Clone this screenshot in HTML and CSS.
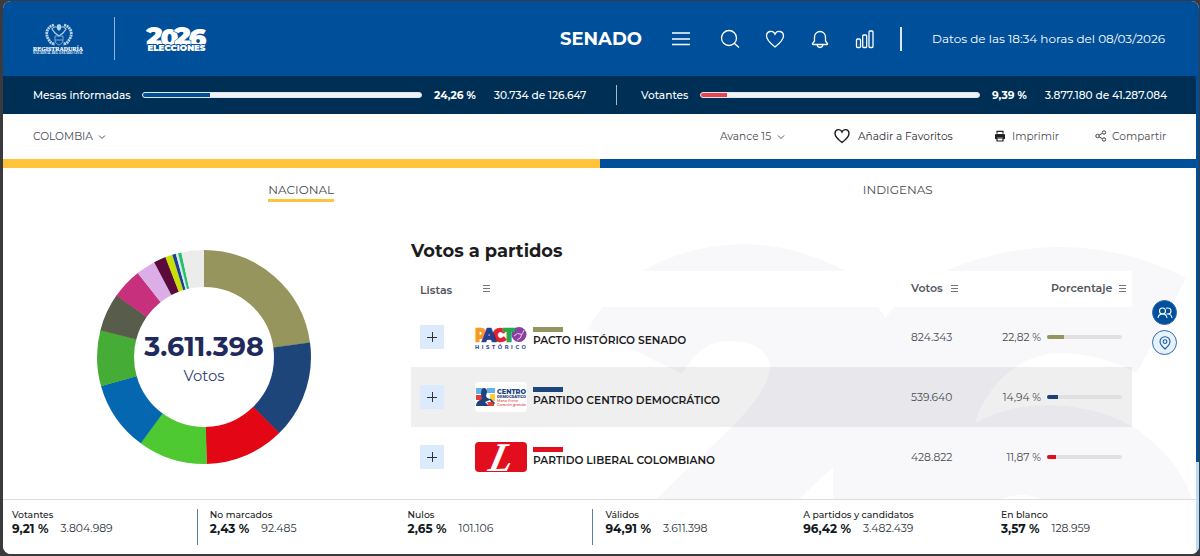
FILE: index.html
```html
<!DOCTYPE html>
<html lang="es">
<head>
<meta charset="utf-8">
<title>Senado 2026</title>
<link rel="stylesheet" href="styles.css">
</head>
<body>
<div class="window">
<div class="page">
  <header class="topbar">
    <svg class="seal" width="54" height="38" viewBox="0 0 54 38">
      <g fill="none" stroke="#b9d1ea">
        <path d="M22 3C14 5 13 13 17 18c1 3 4 4 6 4M32 3c8 2 9 10 5 15-1 3-4 4-6 4" stroke-width="2.800" stroke-dasharray="2 .6"/>
        <path d="M20 7c2-3 5-3 7 0 2-3 5-3 7 0l-3 4-4 3-4-3z" stroke-width="1.200"/>
        <path d="M23 14h8v4c0 3-2 4-4 5-2-1-4-2-4-5zM23 18h8" stroke-width="1" stroke="#7fa9d4"/>
      </g>
      <path d="M25 3l2-1 2 1v4l-2 2-2-2z" fill="#b9d1ea"/>
      <text x="1" y="29" class="seal-name" textLength="50" lengthAdjust="spacingAndGlyphs">REGISTRADURÍA</text>
      <text x="1" y="32" class="seal-sub" textLength="50" lengthAdjust="spacingAndGlyphs">NACIONAL DEL ESTADO CIVIL</text>
    </svg>
    <span class="logo-rule"></span>
    <svg class="elections" width="64" height="34" viewBox="0 0 64 34">
      <g class="year">
        <text x="0" y="22.500" textLength="17" lengthAdjust="spacingAndGlyphs">2</text>
        <text x="14.500" y="24.500" textLength="18" lengthAdjust="spacingAndGlyphs">0</text>
        <text x="42.500" y="24.500" textLength="18" lengthAdjust="spacingAndGlyphs">6</text>
        <text x="28" y="22.500" textLength="17" lengthAdjust="spacingAndGlyphs">2</text>
      </g>
      <text x="1.500" y="28.500" class="elec" textLength="58" lengthAdjust="spacingAndGlyphs">ELECCIONES</text>
    </svg>
    <div class="nav">
      <span class="senado">SENADO</span>
      <svg width="20" height="20" viewBox="0 0 20 20"><path d="M1 4h18M1 10h18M1 15.500h18"/></svg>
      <svg width="20" height="20" viewBox="0 0 20 20"><circle cx="9" cy="9" r="7.500"/><path d="M14.500 14.500l4.500 4"/></svg>
      <svg width="20" height="20" viewBox="0 0 20 20"><path d="M10 18C5 14 1.500 11 1.500 7 1.500 1.800 8 .8 10 5.200c2-4.400 8.500-3.400 8.500 1.800 0 4-3.500 7-8.500 11z"/></svg>
      <svg width="20" height="20" viewBox="0 0 20 20"><path d="M4.500 12V8a5.500 5.500 0 0 1 11 0v4l2 2.500q.4 1-.7 1H3.200q-1.100 0-.7-1zM7 15.500q.5 3 3 3t3-3"/></svg>
      <svg width="20" height="20" viewBox="0 0 20 20"><rect x="1.500" y="10" width="4" height="8.500" rx="1"/><rect x="7.700" y="6" width="4" height="12.500" rx="1"/><rect x="14" y="2" width="4" height="16.500" rx="1"/></svg>
    </div>
    <span class="nav-rule"></span>
    <span class="stamp">Datos de las 18:34 horas del 08/03/2026</span>
  </header>

  <div class="progress">
    <span class="mesas">Mesas informadas</span>
    <div class="meter"><i class="fill-blue" style="width:24.26%"></i></div>
    <b class="pct1">24,26 %</b>
    <span class="c1">30.734 de 126.647</span>
    <span class="p-rule"></span>
    <span class="vot">Votantes</span>
    <div class="meter"><i class="fill-red" style="width:9.39%"></i></div>
    <b class="pct2">9,39 %</b>
    <span>3.877.180 de 41.287.084</span>
  </div>

  <div class="toolbar">
    <span class="place">COLOMBIA</span>
    <svg class="chev" width="8" height="6" viewBox="0 0 8 6"><path d="M1 1.500l3 3 3-3"/></svg>
    <span class="avance">Avance 15</span>
    <svg class="chev" width="8" height="6" viewBox="0 0 8 6"><path d="M1 1.500l3 3 3-3"/></svg>
    <svg class="fav" width="16" height="16" viewBox="0 0 16 16"><path d="M8 14.500C4 11.500 1 9 1 5.500 1 1 6.500.3 8 4c1.500-3.700 7-3 7 1.500 0 3.500-3 6-7 9z" fill="none" stroke="#1c1c1c" stroke-width="1.400"/></svg>
    <span class="fav-t">Añadir a Favoritos</span>
    <svg class="print" width="12" height="12" viewBox="0 0 12 12"><path d="M3 3.500V1.300h6v2.200" fill="none" stroke="#222" stroke-width="1.200"/><path d="M2 4h8q1 0 1 1v4H9V7.500H3V9H1V5q0-1 1-1z" fill="#222"/><path d="M3 8h6v3H3z" fill="none" stroke="#222" stroke-width="1.200"/></svg>
    <span class="print-t">Imprimir</span>
    <svg class="share" width="12" height="12" viewBox="0 0 12 12" fill="none" stroke="#444"><circle cx="2.500" cy="6" r="1.700"/><circle cx="9" cy="2.500" r="1.700"/><circle cx="9" cy="9.500" r="1.700"/><path d="M4 5.200l3.500-1.900M4 6.800l3.500 1.900"/></svg>
    <span class="share-t">Compartir</span>
  </div>
  <div class="stripe"><i></i></div>

  <main class="content">
    <svg class="watermark" width="1193" height="331" viewBox="3 168 1193 331">
      <path fill="#f8f8fb" d="M588 328Q612 290 642 271Q690 244 747 244Q800 246 845 271Q870 290 885 318Q908 288 946 271Q1000 247 1061 247Q1130 248 1186 278L1137 373Q1100 354 1062 353Q1027 353 1000 380Q980 402 975 423Q1008 405 1050 405Q1100 407 1135 428Q1178 457 1192 499H1040Q1021 491 1003 499H833V467L799 499H656L732 427Q770 388 770 367C768 347 748 341 730 341C708 341 696 351 682 374Z"/>
    </svg>
    <nav class="tabs"><div><span class="tab on">NACIONAL</span></div><div><span class="tab">INDIGENAS</span></div></nav>
    <div class="results">
      <div class="chart">
        <svg width="214" height="214" viewBox="0 0 214 214">
          <g transform="rotate(-90 107 107)" fill="none" stroke-width="37">
            <circle cx="107" cy="107" r="88.500" pathLength="360" stroke="#96955d" stroke-dasharray="82.300 277.700"/>
            <circle cx="107" cy="107" r="88.500" pathLength="360" stroke="#1d457a" stroke-dasharray="53.400 306.600" stroke-dashoffset="-82.100"/>
            <circle cx="107" cy="107" r="88.500" pathLength="360" stroke="#e30615" stroke-dasharray="43.300 316.700" stroke-dashoffset="-135.300"/>
            <circle cx="107" cy="107" r="88.500" pathLength="360" stroke="#4fc932" stroke-dasharray="38 322" stroke-dashoffset="-178.400"/>
            <circle cx="107" cy="107" r="88.500" pathLength="360" stroke="#0667b1" stroke-dasharray="38 322" stroke-dashoffset="-216.200"/>
            <circle cx="107" cy="107" r="88.500" pathLength="360" stroke="#45ac35" stroke-dasharray="30.800 329.200" stroke-dashoffset="-254"/>
            <circle cx="107" cy="107" r="88.500" pathLength="360" stroke="#585c4a" stroke-dasharray="20.600 339.400" stroke-dashoffset="-284.600"/>
            <circle cx="107" cy="107" r="88.500" pathLength="360" stroke="#c6307d" stroke-dasharray="16.800 343.200" stroke-dashoffset="-305"/>
            <circle cx="107" cy="107" r="88.500" pathLength="360" stroke="#dcaee8" stroke-dasharray="10.800 349.200" stroke-dashoffset="-321.600"/>
            <circle cx="107" cy="107" r="88.500" pathLength="360" stroke="#5b0b3b" stroke-dasharray="6.800 353.200" stroke-dashoffset="-332.200"/>
            <circle cx="107" cy="107" r="88.500" pathLength="360" stroke="#c9df08" stroke-dasharray="4 356" stroke-dashoffset="-338.800"/>
            <circle cx="107" cy="107" r="88.500" pathLength="360" stroke="#1b3ea0" stroke-dasharray="2 358" stroke-dashoffset="-342.700"/>
            <circle cx="107" cy="107" r="88.500" pathLength="360" stroke="#d3e9ee" stroke-dasharray="1.400 358.600" stroke-dashoffset="-344.600"/>
            <circle cx="107" cy="107" r="88.500" pathLength="360" stroke="#26c165" stroke-dasharray="1.900 358.100" stroke-dashoffset="-345.900"/>
            <circle cx="107" cy="107" r="88.500" pathLength="360" stroke="#ececec" stroke-dasharray="12.300 347.700" stroke-dashoffset="-347.700"/>
          </g>
        </svg>
        <div class="total"><b>3.611.398</b><span>Votos</span></div>
      </div>
      <section class="parties">
        <h2>Votos a partidos</h2>
        <div class="row head">
          <span class="h-listas">Listas</span><i class="sort"></i>
          <span class="h-votos">Votos</span><i class="sort"></i>
          <span class="h-porc">Porcentaje</span><i class="sort"></i>
        </div>
        <div class="row">
          <span class="plus"></span>
          <svg class="plogo" width="52" height="30" viewBox="0 0 52 30">
            <circle cx="44" cy="12.500" r="7.500" fill="#8b3fa0"/>
            <path d="M39 14q4-4 6-2t4-4M42 18q4-1 5-6" stroke="#e7c9ef" fill="none"/>
            <g class="pacto"><text x="0" y="20" fill="#f59a24" stroke="#f59a24" textLength="11" lengthAdjust="spacingAndGlyphs">P</text><text x="17.500" y="20" fill="#e3202c" stroke="#e3202c" textLength="14" lengthAdjust="spacingAndGlyphs">C</text><text x="7" y="20" fill="#25408f" stroke="#25408f" textLength="14" lengthAdjust="spacingAndGlyphs">A</text><text x="28" y="20" fill="#27a64b" stroke="#27a64b" textLength="12" lengthAdjust="spacingAndGlyphs">T</text></g>
            <text x="0" y="26.500" class="hist" textLength="51">HISTÓRICO</text>
          </svg>
          <div class="party"><i style="background:#96955d"></i><b>PACTO HISTÓRICO SENADO</b></div>
          <span class="votes">824.343</span><span class="pct">22,82 %</span>
          <div class="bar"><i style="width:22.82%;background:#96955d"></i></div>
        </div>
        <div class="row alt">
          <span class="plus"></span>
          <svg class="plogo" width="52" height="30" viewBox="0 0 52 30">
            <rect width="52" height="30" rx="4" fill="#fff"/>
            <path d="M1 6h9v6H1zM12 6h8v5h-8z" fill="#63b4e5"/><path d="M1 13h6v5H1z" fill="#e63a35"/><path d="M15 12h5v7h-5z" fill="#ffcf32"/><path d="M9 6q3 0 3 4l-1 4q1 3 5 3l4 4-2 3H1q0-5 6-7l-1-5q0-6 3-6z" fill="#20427e"/><path d="M10 20l5-2 2 4-4 1z" fill="#fff"/><path d="M12 20l6 0 1 4h-5z" fill="#e63a35"/>
            <text x="22" y="11.500" class="cd1" textLength="29" lengthAdjust="spacingAndGlyphs">CENTRO</text>
            <text x="22" y="15.500" class="cd2" textLength="29" lengthAdjust="spacingAndGlyphs">DEMOCRÁTICO</text>
            <text x="22" y="20" class="cd3" textLength="21" lengthAdjust="spacingAndGlyphs">Mano firme</text>
            <text x="22" y="24" class="cd3" textLength="29" lengthAdjust="spacingAndGlyphs">Corazón grande</text>
          </svg>
          <div class="party"><i style="background:#1d457a"></i><b>PARTIDO CENTRO DEMOCRÁTICO</b></div>
          <span class="votes">539.640</span><span class="pct">14,94 %</span>
          <div class="bar"><i style="width:14.94%;background:#1d3f7a"></i></div>
        </div>
        <div class="row">
          <span class="plus"></span>
          <svg class="plogo" width="52" height="30" viewBox="0 0 52 30">
            <rect width="52" height="30" rx="4" fill="#e20d1d"/>
            <text transform="translate(12 28.500) skewX(-14)" class="lib" textLength="23" lengthAdjust="spacingAndGlyphs">L</text>
          </svg>
          <div class="party"><i style="background:#e20d1d"></i><b>PARTIDO LIBERAL COLOMBIANO</b></div>
          <span class="votes">428.822</span><span class="pct">11,87 %</span>
          <div class="bar"><i style="width:11.87%;background:#e20d1d"></i></div>
        </div>
      </section>
      <aside class="side">
        <span class="round solid"><svg width="16" height="14" viewBox="0 0 16 14"><circle cx="5.500" cy="5" r="3"/><path d="M1 12q.5-4 4.500-4t4.500 4M9 2.300q1-.4 2-.3a3 3 0 0 1 0 6q3.500.3 4 4M9.500 7.700q.7.400 1.500.3"/></svg></span>
        <span class="round"><svg width="12" height="14" viewBox="0 0 12 14"><path d="M6 13Q1 8.500 1 5.700a5 5 0 0 1 10 0Q11 8.500 6 13z"/><circle cx="6" cy="5.600" r="1.900"/></svg></span>
      </aside>
    </div>
  </main>

  <footer class="summary">
    <div><span class="k">Votantes</span><p><b>9,21 %</b><span>3.804.989</span></p></div>
    <div class="line"><span class="k">No marcados</span><p><b>2,43 %</b><span>92.485</span></p></div>
    <div><span class="k">Nulos</span><p><b>2,65 %</b><span>101.106</span></p></div>
    <div class="line"><span class="k">Válidos</span><p><b>94,91 %</b><span>3.611.398</span></p></div>
    <div><span class="k">A partidos y candidatos</span><p><b>96,42 %</b><span>3.482.439</span></p></div>
    <div><span class="k">En blanco</span><p><b>3,57 %</b><span>128.959</span></p></div>
  </footer>
</div>
<div class="scroll"></div>
</div>
</body>
</html>
```
FILE: styles.css
```css
* { box-sizing: border-box; }
body { margin: 0; padding: 1px 1px 0 3px; height: 556px; overflow: hidden; background: #3b3b3d; font-family: Montserrat, Inter, sans-serif; color: #4b4b4f; white-space: nowrap; }
svg { display: block; flex: none; }
p { margin: 0; }
.window { display: flex; height: 553px; border-radius: 8px; overflow: hidden; background: #fff; }
.page { width: 1193px; display: flex; flex-direction: column; }
.scroll { width: 3px; background: linear-gradient(#004f9b 461px, #b9dcfb 461px); }

.topbar { height: 75px; flex: none; background: #004f9b; color: #fff; display: flex; align-items: center; padding-left: 29px; }
.topbar > * { flex: none; }
.seal { margin-top: 4px; overflow: visible; }
.seal-name { font: bold 6.800px "Liberation Serif", serif; fill: #fff; stroke: #fff; stroke-width: .2px; }
.seal-sub { font: bold 3px "Liberation Serif", serif; fill: #fff; }
.logo-rule { width: 1px; height: 43px; background: #8fb4d8; margin: 0 31px 0 28px; }
.year { font: 900 24px Montserrat, Inter, sans-serif; fill: #fff; stroke: #004f9b; stroke-width: 1px; paint-order: stroke; }
.elec { font: 900 9.500px Montserrat, Inter, sans-serif; fill: #fff; stroke: #004f9b; stroke-width: 1.800px; paint-order: stroke; }
.nav { display: flex; align-items: center; margin-left: 350px; width: 315px; }
.nav svg { fill: none; stroke: #fff; stroke-width: 1.300; margin-right: 25px; }
.nav svg:nth-of-type(1) { margin-right: 29px; }
.senado { font-size: 18px; font-weight: 700; flex: none; width: 111px; }
.nav-rule { width: 2px; height: 24px; background: #dce9f5; margin: 0 30px 0 25px; }
.stamp { font-size: 12px; }

.progress { height: 38px; flex: none; background: #002f56; color: #fff; display: flex; align-items: center; padding-left: 30px; font-size: 10.600px; font-weight: 500; }
.progress > * { flex: none; }
.mesas { width: 109px; }
.meter { width: 280px; height: 6px; border-radius: 4px; background: #f1f1f3; border: 1px solid #dbe6f0; overflow: hidden; }
.meter i { display: block; height: 4px; }
.fill-blue { background: #004f9b; }
.fill-red { background: #e8434e; }
.pct1 { padding-left: 12px; width: 72px; }
.c1 { width: 122px; }
.p-rule { width: 1px; height: 20px; background: #a9bccd; margin-right: 24px; }
.vot { width: 59px; }
.pct2 { padding-left: 12px; width: 65px; }

.toolbar { height: 45px; flex: none; display: flex; align-items: center; padding: 0 0 1px 30px; font-size: 10.600px; }
.toolbar > * { flex: none; }
.chev { fill: none; stroke: #555; margin-top: 2px; }
.place { width: 65px; }
.avance { margin-left: 614px; width: 57px; }
.fav { margin-left: 49px; }
.fav-t { margin-left: 8px; width: 136px; color: #2f2f33; }
.print-t { margin-left: 6px; width: 83px; }
.share-t { margin-left: 5px; }
.stripe { height: 9px; flex: none; background: #004f9b; }
.stripe i { display: block; width: 597px; height: 9px; background: #ffc33c; }

.content { position: relative; height: 331px; flex: none; }
.watermark { position: absolute; left: 0; top: 0; }
.tabs { position: relative; display: grid; grid-template-columns: 1fr 1fr; height: 35px; padding-top: 14px; }
.tabs div { display: flex; justify-content: center; }
.tab { font-size: 12px; line-height: 16px; height: 20px; }
.tab.on { border-bottom: 3px solid #ffc33c; }
.results { position: relative; display: flex; }
.chart { width: 214px; height: 214px; margin: 47px 100px 0 94px; display: grid; }
.chart > * { grid-area: 1 / 1; }
.total { display: flex; flex-direction: column; align-items: center; padding-top: 81px; color: #1f2a5c; }
.total b { font-size: 27px; line-height: 32px; }
.total span { font-size: 14.800px; line-height: 20px; margin-top: 3px; color: #334574; }

.parties { width: 721px; padding-top: 36px; }
h2 { margin: 0 0 8px; font-size: 17.850px; line-height: 24px; font-weight: 700; color: #1c1c1e; }
.row { height: 60px; display: flex; align-items: center; padding-left: 9px; }
.row > * { flex: none; }
.head { height: 36px; background: #fff; font-size: 11px; font-weight: 600; color: #54545f; padding-bottom: 2px; }
.sort { width: 7px; height: 7px; border: solid #777; border-width: 1px 0; background: linear-gradient(#777, #777) 0 2px / 7px 1px no-repeat; margin-top: 1px; }
.h-listas { width: 63px; padding-top: 4px; }
.h-votos { margin-left: 421px; width: 40px; }
.h-porc { margin-left: 93px; width: 68px; }
.alt { background: rgba(20, 15, 35, .065); }
.plus { width: 24px; height: 24px; background: linear-gradient(#2c3440, #2c3440) center / 10px 1px no-repeat, linear-gradient(#2c3440, #2c3440) center / 1px 10px no-repeat, #dbeafd; }
.plogo { margin-left: 31px; overflow: visible; }
.pacto { font: 900 20px Montserrat, Inter, sans-serif; stroke-width: .7px; }
.hist { font: 700 5.200px Montserrat, Inter, sans-serif; fill: #25408f; }
.cd1 { font: 800 7px Montserrat, Inter, sans-serif; fill: #20427e; }
.cd2 { font: 800 3.800px Montserrat, Inter, sans-serif; fill: #20427e; }
.cd3 { font: 500 4px Montserrat, Inter, sans-serif; fill: #e0403e; }
.lib { font: italic bold 41px "Liberation Serif", serif; fill: #fff; }
.party { margin-left: 6px; width: 378px; }
.party i { display: block; width: 30px; height: 5px; margin-top: 2px; }
.party b { display: block; font-size: 10.650px; line-height: 17px; color: #1b1b1d; font-weight: 600; }
.votes { font-size: 10.700px; width: 76px; }
.pct { font-size: 10.600px; width: 54px; text-align: right; }
.bar { width: 75px; height: 4px; margin-left: 6px; border-radius: 2px; background: #e0e0e2; overflow: hidden; }
.bar i { display: block; height: 4px; }
.side { padding: 97px 0 0 17px; display: flex; flex-direction: column; gap: 5px; }
.round { width: 25px; height: 25px; margin-left: 3px; border-radius: 50%; border: 1px solid #2e6cad; background: #e6f2fd; display: grid; place-items: center; }
.round svg { fill: none; stroke: #1a5a9f; stroke-width: 1.100; }
.solid { background: #004f9b; }
.solid svg { stroke: #fff; }

.summary { position: relative; flex: 1; border-top: 1px solid #dedee0; background: #fff; display: grid; grid-template-columns: repeat(6, 197.800px); color: #2d3540; padding-top: 9px; }
.summary > div { padding-left: 9px; height: 36px; }
.summary .line { border-left: 1px solid #5a7fa5; margin-left: -4px; padding-left: 12px; }
.k { display: block; font-size: 9.250px; line-height: 12px; font-weight: 500; color: #222; }
.summary p { display: flex; gap: 12px; line-height: 15px; font-size: 10.800px; }
.summary b { color: #111820; font-size: 12px; }
```
